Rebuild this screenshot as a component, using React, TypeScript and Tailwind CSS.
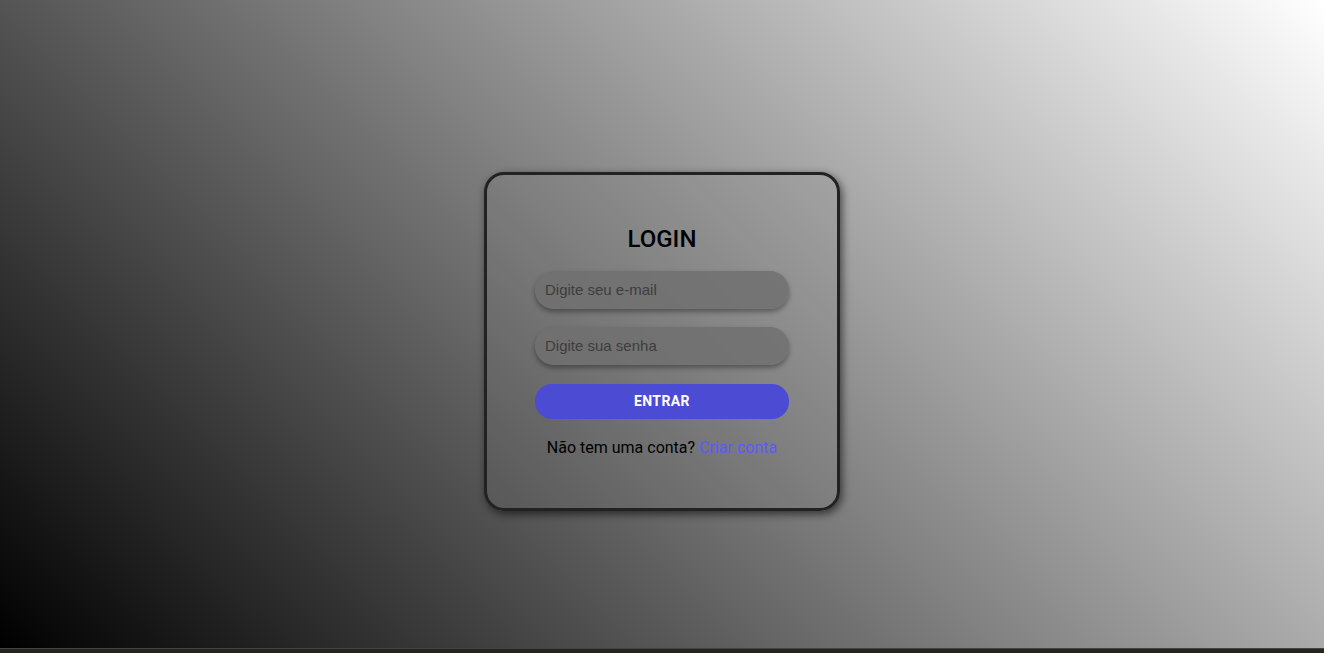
import React from "react";

const App = () => {
  return (
    <div className="flex h-[653px] w-full flex-col bg-[#26241f]">
      <main className="flex h-[649px] w-full items-center justify-center border-b border-[#444444] bg-[linear-gradient(45deg,#000000,#ffffff)] font-['Roboto',sans-serif]">
        <div className="mt-[34px] flex h-[339px] w-[356px] flex-col items-center rounded-[20px] border-[3px] border-[#222222] bg-[rgba(128,128,128,0.14)] px-[48px] pt-[50px] shadow-[2px_3px_8px_rgba(0,0,0,0.6)]">
          <h1 className="text-[24px] font-medium leading-[28px] text-black">
            LOGIN
          </h1>
          <form className="mt-[18px] flex w-[254px] flex-col">
            <input
              type="email"
              placeholder="Digite seu e-mail"
              className="h-[38px] w-full rounded-[19px] bg-[rgba(112,112,112,0.85)] px-[10px] font-['Liberation_Sans',Arial,sans-serif] text-[15px] text-black shadow-[0_3px_5px_rgba(0,0,0,0.35)] outline-none placeholder:text-[#3d3d3d]"
            />
            <input
              type="password"
              placeholder="Digite sua senha"
              className="mt-[18px] h-[38px] w-full rounded-[19px] bg-[rgba(112,112,112,0.85)] px-[10px] font-['Liberation_Sans',Arial,sans-serif] text-[15px] text-black shadow-[0_3px_5px_rgba(0,0,0,0.35)] outline-none placeholder:text-[#3d3d3d]"
            />
            <button
              type="button"
              className="mt-[19px] h-[35px] w-full rounded-[17px] bg-[#4b4bd4] text-[14px] font-bold tracking-[0.4px] text-white"
            >
              ENTRAR
            </button>
          </form>
          <p className="mt-[19px] text-[16px] leading-[19px] text-black">
            Não tem uma conta?{" "}
            <a href="#" className="text-[#5a5aff]">
              Criar conta
            </a>
          </p>
        </div>
      </main>
    </div>
  );
};

export default App;
